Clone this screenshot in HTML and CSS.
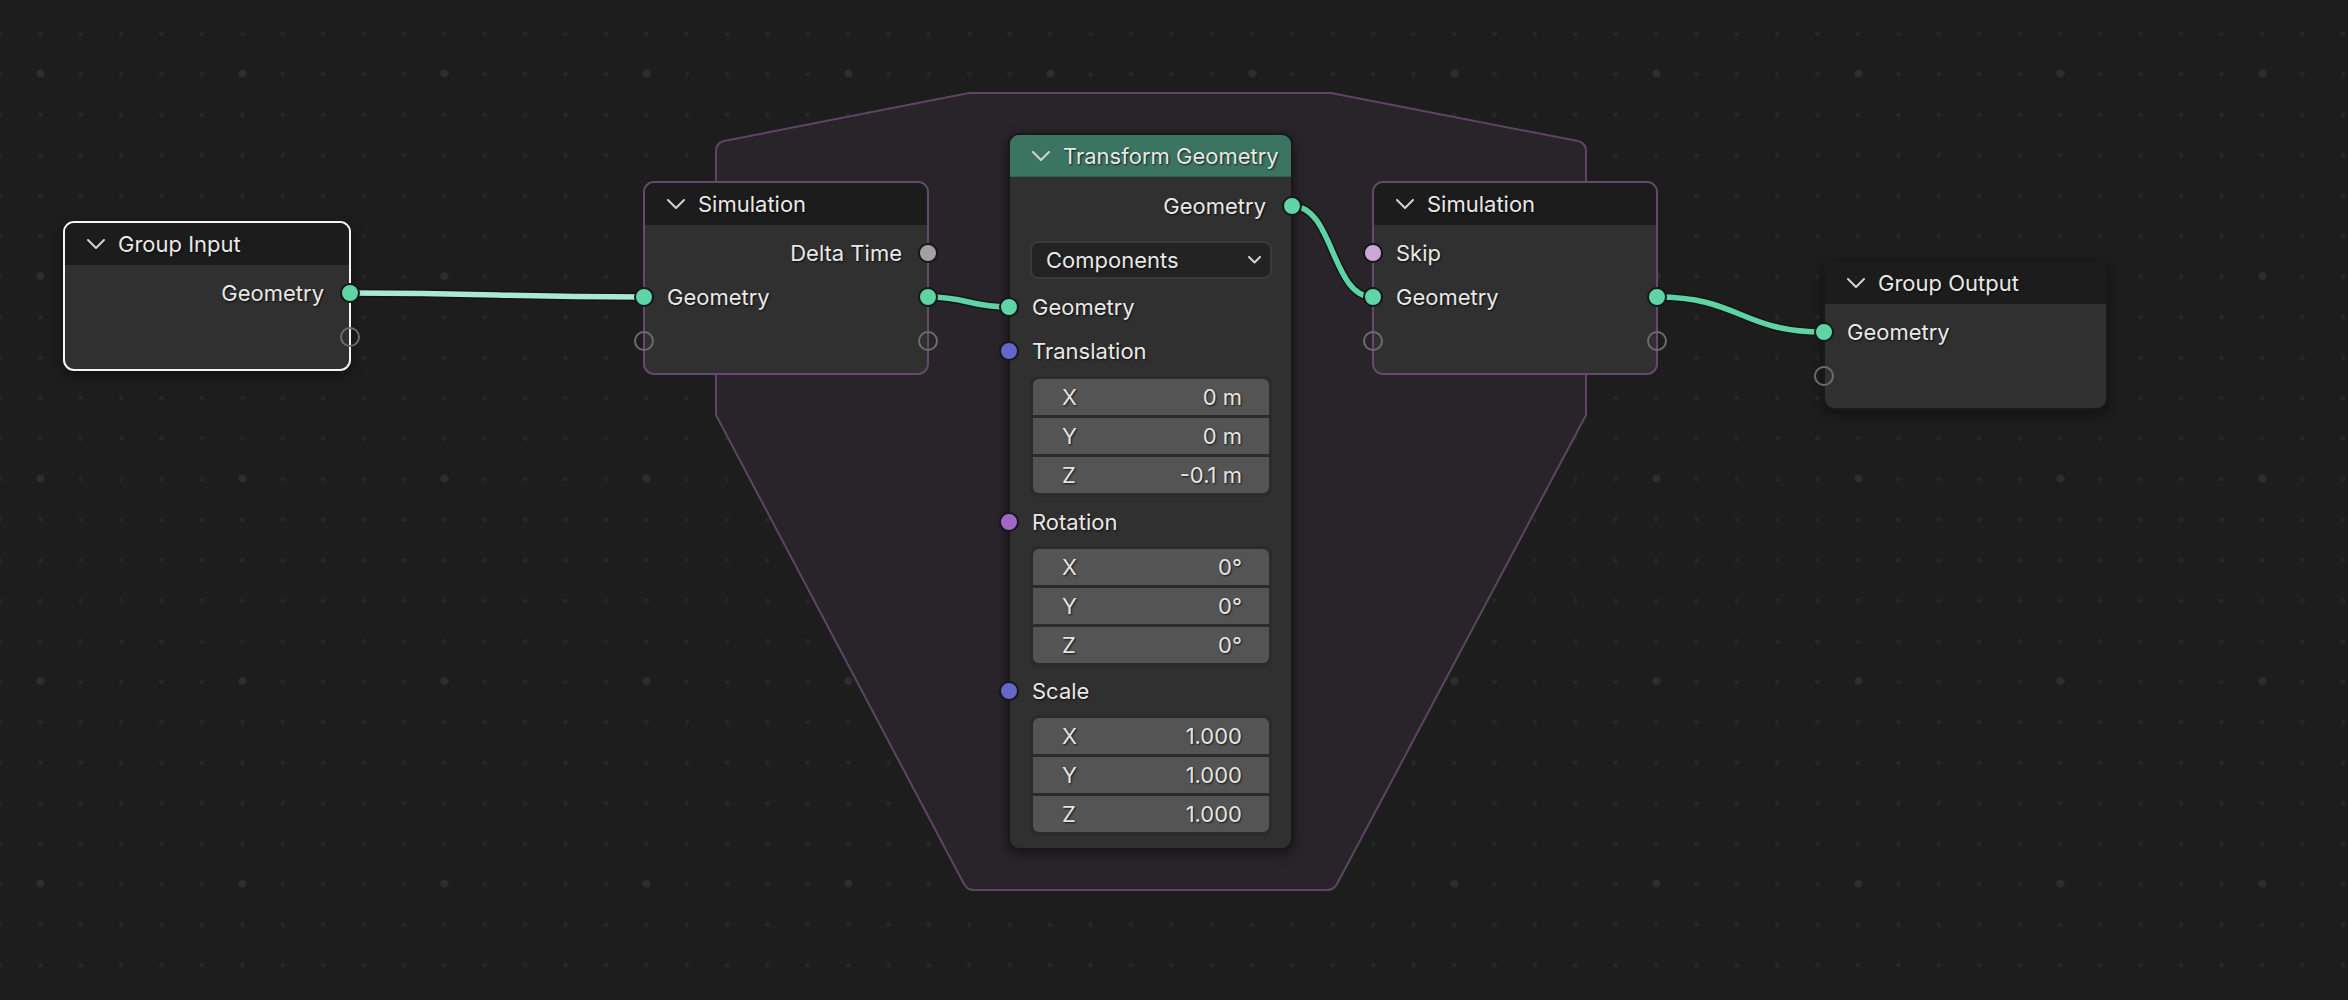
FILE: index.html
```html
<!DOCTYPE html>
<html lang="en">
<head>
<meta charset="utf-8">
<title>Node Editor</title>
<link rel="stylesheet" href="styles.css">
</head>
<body>
<div class="editor">
  <svg class="layer frame-layer" width="2348" height="1000" viewBox="0 0 2348 1000">
    <path class="zone" d="M716 151 Q716 143 724 141 L969 93 L1331 93 L1578 141 Q1586 143 1586 151 L1586 415 L1337 884 Q1334 890 1327 890 L974 890 Q967 890 964 884 L716 415 Z"/>
  </svg>

  <svg class="layer link-layer" width="2348" height="1000" viewBox="0 0 2348 1000">
    <path class="link-shadow" d="M350 293 C497 293 497 297 644 297"/>
    <path class="link active" d="M350 293 C497 293 497 297 644 297"/>
    <path class="link-shadow" d="M928 297 C968 297 969 307 1009 307"/>
    <path class="link" d="M928 297 C968 297 969 307 1009 307"/>
    <path class="link-shadow" d="M1292 206 C1334 206 1331 297 1373 297"/>
    <path class="link" d="M1292 206 C1334 206 1331 297 1373 297"/>
    <path class="link-shadow" d="M1657 297 C1740 297 1741 332 1824 332"/>
    <path class="link" d="M1657 297 C1740 297 1741 332 1824 332"/>
  </svg>

  <!-- Group Input -->
  <div class="node node-group-input selected">
    <div class="node-header">
      <svg class="chev" viewBox="0 0 18 10"><polyline points="1,1 9,9 17,1"/></svg>
      <span class="title">Group Input</span>
    </div>
    <div class="node-body">
      <div class="row out"><span class="label">Geometry</span><i class="socket s-out geo"></i></div>
      <div class="row out"><i class="socket s-out empty"></i></div>
    </div>
  </div>

  <!-- Simulation Input -->
  <div class="node node-sim-in zone-node">
    <div class="node-header">
      <svg class="chev" viewBox="0 0 18 10"><polyline points="1,1 9,9 17,1"/></svg>
      <span class="title">Simulation</span>
    </div>
    <div class="node-body">
      <div class="row out"><span class="label">Delta Time</span><i class="socket s-out float"></i></div>
      <div class="row"><i class="socket s-in geo"></i><span class="label">Geometry</span><i class="socket s-out geo"></i></div>
      <div class="row"><i class="socket s-in empty"></i><i class="socket s-out empty"></i></div>
    </div>
  </div>

  <!-- Transform Geometry -->
  <div class="node node-transform">
    <div class="node-header header-geo">
      <svg class="chev" viewBox="0 0 18 10"><polyline points="1,1 9,9 17,1"/></svg>
      <span class="title">Transform Geometry</span>
    </div>
    <div class="node-body body-transform">
      <div class="row out"><span class="label">Geometry</span><i class="socket s-out geo"></i></div>
      <div class="dropdown">
        <span class="label">Components</span>
        <svg class="dd-chev" viewBox="0 0 13 8"><polyline points="1,1 6.5,6.5 12,1"/></svg>
      </div>
      <div class="row"><i class="socket s-in geo"></i><span class="label">Geometry</span></div>
      <div class="row"><i class="socket s-in vector"></i><span class="label">Translation</span></div>
      <div class="vec">
        <div class="vec-row"><span>X</span><span>0 m</span></div>
        <div class="vec-row"><span>Y</span><span>0 m</span></div>
        <div class="vec-row"><span>Z</span><span>-0.1 m</span></div>
      </div>
      <div class="row row-gap3"><i class="socket s-in rotation"></i><span class="label">Rotation</span></div>
      <div class="vec vec-gap2">
        <div class="vec-row"><span>X</span><span>0°</span></div>
        <div class="vec-row"><span>Y</span><span>0°</span></div>
        <div class="vec-row"><span>Z</span><span>0°</span></div>
      </div>
      <div class="row row-gap2"><i class="socket s-in vector"></i><span class="label">Scale</span></div>
      <div class="vec vec-gap2">
        <div class="vec-row"><span>X</span><span>1.000</span></div>
        <div class="vec-row"><span>Y</span><span>1.000</span></div>
        <div class="vec-row"><span>Z</span><span>1.000</span></div>
      </div>
    </div>
  </div>

  <!-- Simulation Output -->
  <div class="node node-sim-out zone-node">
    <div class="node-header">
      <svg class="chev" viewBox="0 0 18 10"><polyline points="1,1 9,9 17,1"/></svg>
      <span class="title">Simulation</span>
    </div>
    <div class="node-body">
      <div class="row"><i class="socket s-in boolean"></i><span class="label">Skip</span></div>
      <div class="row"><i class="socket s-in geo"></i><span class="label">Geometry</span><i class="socket s-out geo"></i></div>
      <div class="row"><i class="socket s-in empty"></i><i class="socket s-out empty"></i></div>
    </div>
  </div>

  <!-- Group Output -->
  <div class="node node-group-output">
    <div class="node-header">
      <svg class="chev" viewBox="0 0 18 10"><polyline points="1,1 9,9 17,1"/></svg>
      <span class="title">Group Output</span>
    </div>
    <div class="node-body">
      <div class="row"><i class="socket s-in geo"></i><span class="label">Geometry</span></div>
      <div class="row"><i class="socket s-in empty"></i></div>
    </div>
  </div>
</div>
</body>
</html>
```
FILE: styles.css
```css
html, body {
  margin: 0;
  padding: 0;
  background: #1d1d1d;
}

body {
  font-family: Inter, "Noto Sans", "Liberation Sans", sans-serif;
}

.editor {
  position: relative;
  width: 2348px;
  height: 1000px;
  overflow: hidden;
  background-color: #1d1d1d;
  background-image:
    radial-gradient(circle, #2e2e2e 0, #2e2e2e 3.4px, rgba(46,46,46,0) 4.4px),
    radial-gradient(circle, #272727 0, #272727 1.9px, rgba(39,39,39,0) 2.7px);
  background-size: 202px 202.5px, 40.4px 40.5px;
  background-position: -60.6px -27.7px, -20.2px 13.5px;
}

.layer {
  position: absolute;
  left: 0;
  top: 0;
}

.frame-layer { z-index: 0; }
.link-layer { z-index: 1; }

.zone {
  fill: #29232a;
  stroke: #5e4563;
  stroke-width: 2;
  stroke-linejoin: round;
}

.link-shadow {
  fill: none;
  stroke: #151515;
  stroke-width: 8.5;
  stroke-linecap: round;
}

.link {
  fill: none;
  stroke: #5dd3a6;
  stroke-width: 5.5;
  stroke-linecap: round;
}

.link.active {
  stroke: #a9e9d3;
}

/* ---------- nodes ---------- */
.node {
  position: absolute;
  z-index: 2;
  box-sizing: border-box;
  border: 2px solid #191919;
  border-radius: 11px;
  background: #303030;
  color: #e8e8e8;
  font-size: 22px;
  box-shadow: 0 4px 12px rgba(0, 0, 0, 0.45);
  text-shadow: 1px 1px 2px rgba(0, 0, 0, 0.75);
}

.node.selected {
  border-color: #f4f4f4;
}

.node.zone-node {
  border-color: #644a69;
  box-shadow: none;
}

.node-group-input  { left: 63px;   top: 221px; width: 288px; }
.node-sim-in       { left: 643px;  top: 181px; width: 286px; }
.node-transform    { left: 1008px; top: 133px; width: 285px; }
.node-sim-out      { left: 1372px; top: 181px; width: 286px; }
.node-group-output { left: 1823px; top: 260px; width: 285px; }

.node-header {
  height: 42px;
  box-sizing: border-box;
  display: flex;
  align-items: center;
  gap: 13px;
  padding-left: 22px;
  background: #1c1c1c;
  border-radius: 9px 9px 0 0;
}

.header-geo {
  background: #3b7461;
  border-bottom: 1px solid #30604f;
}

.chev {
  width: 18px;
  height: 10px;
  flex: none;
}

.chev polyline,
.dd-chev polyline {
  fill: none;
  stroke: #d2d2d2;
  stroke-width: 2;
  stroke-linecap: round;
  stroke-linejoin: round;
}

.title {
  line-height: 1;
  white-space: nowrap;
}

.node-body {
  padding: 6px 0 10px;
}

.body-transform {
  padding: 7px 0 12px;
}

.row {
  position: relative;
  height: 44px;
  box-sizing: border-box;
  display: flex;
  align-items: center;
  padding: 0 25px 0 22px;
}

.row.out {
  justify-content: flex-end;
}

.row-gap3 { margin-top: 3px; }
.row-gap2 { margin-top: 2px; }

.label {
  white-space: nowrap;
}

/* ---------- sockets ---------- */
.socket {
  position: absolute;
  top: 50%;
  width: 16px;
  height: 16px;
  margin-top: -10px;
  border: 2px solid #171717;
  border-radius: 50%;
  box-sizing: content-box;
}

.s-in  { left: -11px; }
.s-out { right: -11px; }

.socket.geo      { background: #5fd4a7; }
.socket.float    { background: #a1a1a1; }
.socket.vector   { background: #6466c9; }
.socket.rotation { background: #a167c8; }
.socket.boolean  { background: #cca6d6; }
.socket.empty {
  background: transparent;
  border-color: #6c6c6c;
}

/* ---------- widgets ---------- */
.dropdown {
  margin: 13px 19px 6px 20px;
  height: 38px;
  box-sizing: border-box;
  border: 2px solid #3a3a3a;
  border-radius: 8px;
  background: #232323;
  display: flex;
  align-items: center;
  justify-content: space-between;
  padding: 0 9px 0 14px;
}

.dd-chev {
  width: 13px;
  height: 8px;
}

.vec {
  margin: 3px 19px 0 20px;
  padding: 3px 3px 4px;
  background: #2b2b2b;
  border-radius: 8px;
  display: flex;
  flex-direction: column;
  gap: 3px;
}

.vec-gap2 { margin-top: 2px; }

.vec-row {
  height: 36px;
  box-sizing: border-box;
  background: #545454;
  display: flex;
  align-items: center;
  justify-content: space-between;
  padding: 0 27px 0 29px;
  color: #e4e4e4;
}

.vec-row:first-child { border-radius: 6px 6px 0 0; }
.vec-row:last-child  { border-radius: 0 0 6px 6px; }
```
